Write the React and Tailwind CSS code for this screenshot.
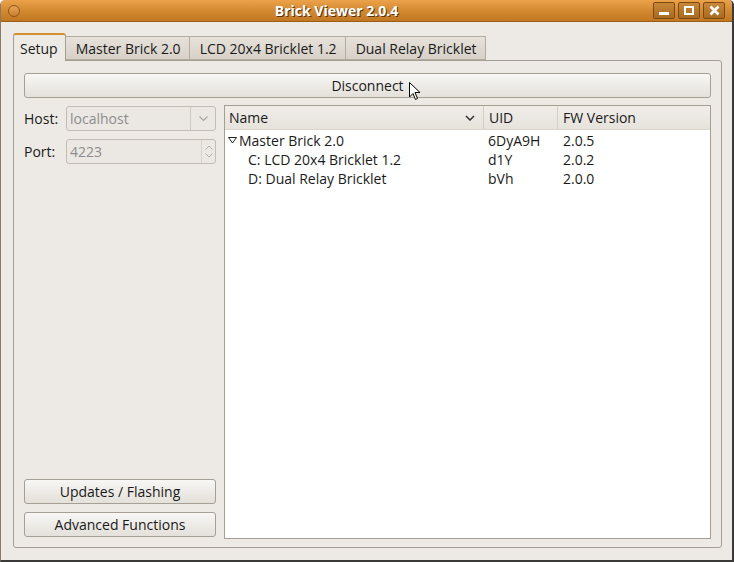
import React from 'react';

const font = { fontFamily: '"Open Sans", "DejaVu Sans", sans-serif' };

function TitleButton({ children }) {
  return (
    <div className="w-[22px] h-[17px] rounded-[2px] border border-[#7a4a14] bg-gradient-to-b from-[#c98838] to-[#a86a22] flex items-center justify-center">
      {children}
    </div>
  );
}

function Tab({ label, active }) {
  if (active) {
    return (
      <div className="h-[28px] -mb-px pl-[6px] pr-[7px] flex items-center border border-b-0 border-[#a49e94] border-t-[#d98e2e] border-t-2 rounded-t-[3px] bg-[#edeae5] text-[#1a1a1a] text-[14px] z-10">
        {label}
      </div>
    );
  }
  return (
    <div className="h-[24px] pl-[10px] pr-[8px] flex items-center border border-l-0 border-[#b3aca2] bg-gradient-to-b from-[#e6e1da] to-[#d7d1c8] text-[#1a1a1a] text-[14px]">
      {label}
    </div>
  );
}

function Button({ children, className = '' }) {
  return (
    <div className={`h-[25px] flex items-center justify-center rounded-[3px] border border-[#a59f96] bg-gradient-to-b from-[#f8f7f5] to-[#e4e0da] text-[14px] text-[#1a1a1a] ${className}`}>
      {children}
    </div>
  );
}

export default function App() {
  const rows = [
    { name: 'Master Brick 2.0', uid: '6DyA9H', fw: '2.0.5', top: true },
    { name: 'C: LCD 20x4 Bricklet 1.2', uid: 'd1Y', fw: '2.0.2' },
    { name: 'D: Dual Relay Bricklet', uid: 'bVh', fw: '2.0.0' },
  ];

  return (
    <div style={font} className="w-[734px] h-[562px] flex flex-col bg-[#edeae5] border-l border-r-2 border-b-2 border-[#3b3a38] border-l-[#8a7a66] rounded-t-[5px] overflow-hidden">
      {/* Title bar */}
      <div className="h-[22px] shrink-0 flex items-center px-[7px] bg-gradient-to-b from-[#eca24a] via-[#d48a30] to-[#c27822] border-b border-[#9a5e1a]">
        <div className="w-[12px] h-[12px] rounded-full border border-[#8a561c] bg-gradient-to-b from-[#e8a456] to-[#c98032]" />
        <div className="flex-1 text-center text-white font-bold text-[14px] [text-shadow:1px_1px_0_#5a3410]">
          Brick Viewer 2.0.4
        </div>
        <div className="flex gap-[3px]">
          <TitleButton>
            <div className="w-[10px] h-[3px] bg-white mt-[5px]" />
          </TitleButton>
          <TitleButton>
            <div className="w-[10px] h-[9px] border-2 border-white" />
          </TitleButton>
          <TitleButton>
            <svg width="11" height="11" viewBox="0 0 11 11">
              <path d="M1.5 1.5 L9.5 9.5 M9.5 1.5 L1.5 9.5" stroke="white" strokeWidth="2.6" />
            </svg>
          </TitleButton>
        </div>
      </div>

      {/* Body */}
      <div className="flex-1 flex flex-col pl-[12px] pr-[10px] pt-[11px] pb-[12px]">
        <div className="flex items-end">
          <Tab label="Setup" active />
          <Tab label="Master Brick 2.0" />
          <Tab label="LCD 20x4 Bricklet 1.2" />
          <Tab label="Dual Relay Bricklet" />
        </div>
        <div className="flex-1 flex flex-col border border-[#a49e94] rounded-b-[3px] rounded-tr-[3px] px-[10px] pt-[12px] pb-[7px] gap-[7px]">
          <Button className="w-full relative">
            Disconnect
            <svg className="absolute left-[384px] top-[8px]" width="12" height="19" viewBox="0 0 12 19">
              <path d="M0.5 0.5 L0.5 15 L4 11.5 L6.5 17.5 L8.5 16.5 L6 10.5 L11 10.5 Z" fill="white" stroke="black" strokeWidth="1" />
            </svg>
          </Button>
          <div className="flex-1 flex gap-[8px]">
            {/* Left column */}
            <div className="w-[192px] flex flex-col pb-[3px]">
              <div className="flex items-center h-[25px] mt-[1px]">
                <span className="w-[42px] text-[14px] text-[#1a1a1a]">Host:</span>
                <div className="flex-1 h-[25px] flex border border-[#c2bcb3] rounded-[3px] bg-[#ebe8e3]">
                  <span className="flex-1 pl-[3px] flex items-center text-[14px] text-[#8c8c8c]">localhost</span>
                  <div className="w-[25px] border-l border-[#cfc9c1] flex items-center justify-center">
                    <svg width="9" height="6" viewBox="0 0 9 6">
                      <path d="M0.5 0.5 L4.5 4.5 L8.5 0.5" fill="none" stroke="#a9a49c" strokeWidth="1.2" />
                    </svg>
                  </div>
                </div>
              </div>
              <div className="flex items-center h-[25px] mt-[8px]">
                <span className="w-[42px] text-[14px] text-[#1a1a1a]">Port:</span>
                <div className="flex-1 h-[25px] flex border border-[#c2bcb3] rounded-[3px] bg-[#ebe8e3]">
                  <span className="flex-1 pl-[3px] flex items-center text-[14px] text-[#8c8c8c]">4223</span>
                  <div className="w-[14px] border-l border-[#d6d1ca] flex flex-col items-center justify-center gap-[3px]">
                    <svg width="8" height="5" viewBox="0 0 8 5">
                      <path d="M0.5 4.5 L4 1 L7.5 4.5" fill="none" stroke="#b5b0a8" strokeWidth="1" />
                    </svg>
                    <svg width="8" height="5" viewBox="0 0 8 5">
                      <path d="M0.5 0.5 L4 4 L7.5 0.5" fill="none" stroke="#b5b0a8" strokeWidth="1" />
                    </svg>
                  </div>
                </div>
              </div>
              <div className="flex-1" />
              <Button className="w-full bg-gradient-to-b from-[#f5ede4] to-[#e2d7cb]">Updates / Flashing</Button>
              <Button className="w-full mt-[8px]">Advanced Functions</Button>
            </div>

            {/* Tree */}
            <div className="flex-1 flex flex-col border border-[#a49e94] bg-white mb-[1px]">
              <div className="h-[24px] flex bg-gradient-to-b from-[#f1eeea] to-[#e6e2dc] border-b border-[#d9d4cd] text-[14px] text-[#1a1a1a]">
                <div className="w-[259px] flex items-center justify-between pl-[4px] pr-[8px] border-r border-[#d3cec6]">
                  <span>Name</span>
                  <svg width="10" height="6" viewBox="0 0 10 6">
                    <path d="M1 1 L5 5 L9 1" fill="none" stroke="#333" strokeWidth="1.5" />
                  </svg>
                </div>
                <div className="w-[74px] flex items-center pl-[5px] border-r border-[#d3cec6]">UID</div>
                <div className="flex-1 flex items-center pl-[5px]">
                  FW Version
                </div>
              </div>
              <div className="pt-[1px]">
                {rows.map((r) => (
                  <div key={r.name} className="h-[19px] flex items-center text-[14px] text-[#1a1a1a]">
                    <div className="w-[259px] flex items-center">
                      {r.top ? (
                        <>
                          <svg className="ml-[3px] mr-[2px]" width="9" height="7" viewBox="0 0 9 7">
                            <path d="M0.5 0.5 L8.5 0.5 L4.5 6 Z" fill="none" stroke="#222" strokeWidth="1" />
                          </svg>
                          <span>{r.name}</span>
                        </>
                      ) : (
                        <span className="pl-[23px]">{r.name}</span>
                      )}
                    </div>
                    <div className="w-[74px] pl-[4px]">{r.uid}</div>
                    <div className="pl-[5px]">{r.fw}</div>
                  </div>
                ))}
              </div>
            </div>
          </div>
        </div>
      </div>
    </div>
  );
}
